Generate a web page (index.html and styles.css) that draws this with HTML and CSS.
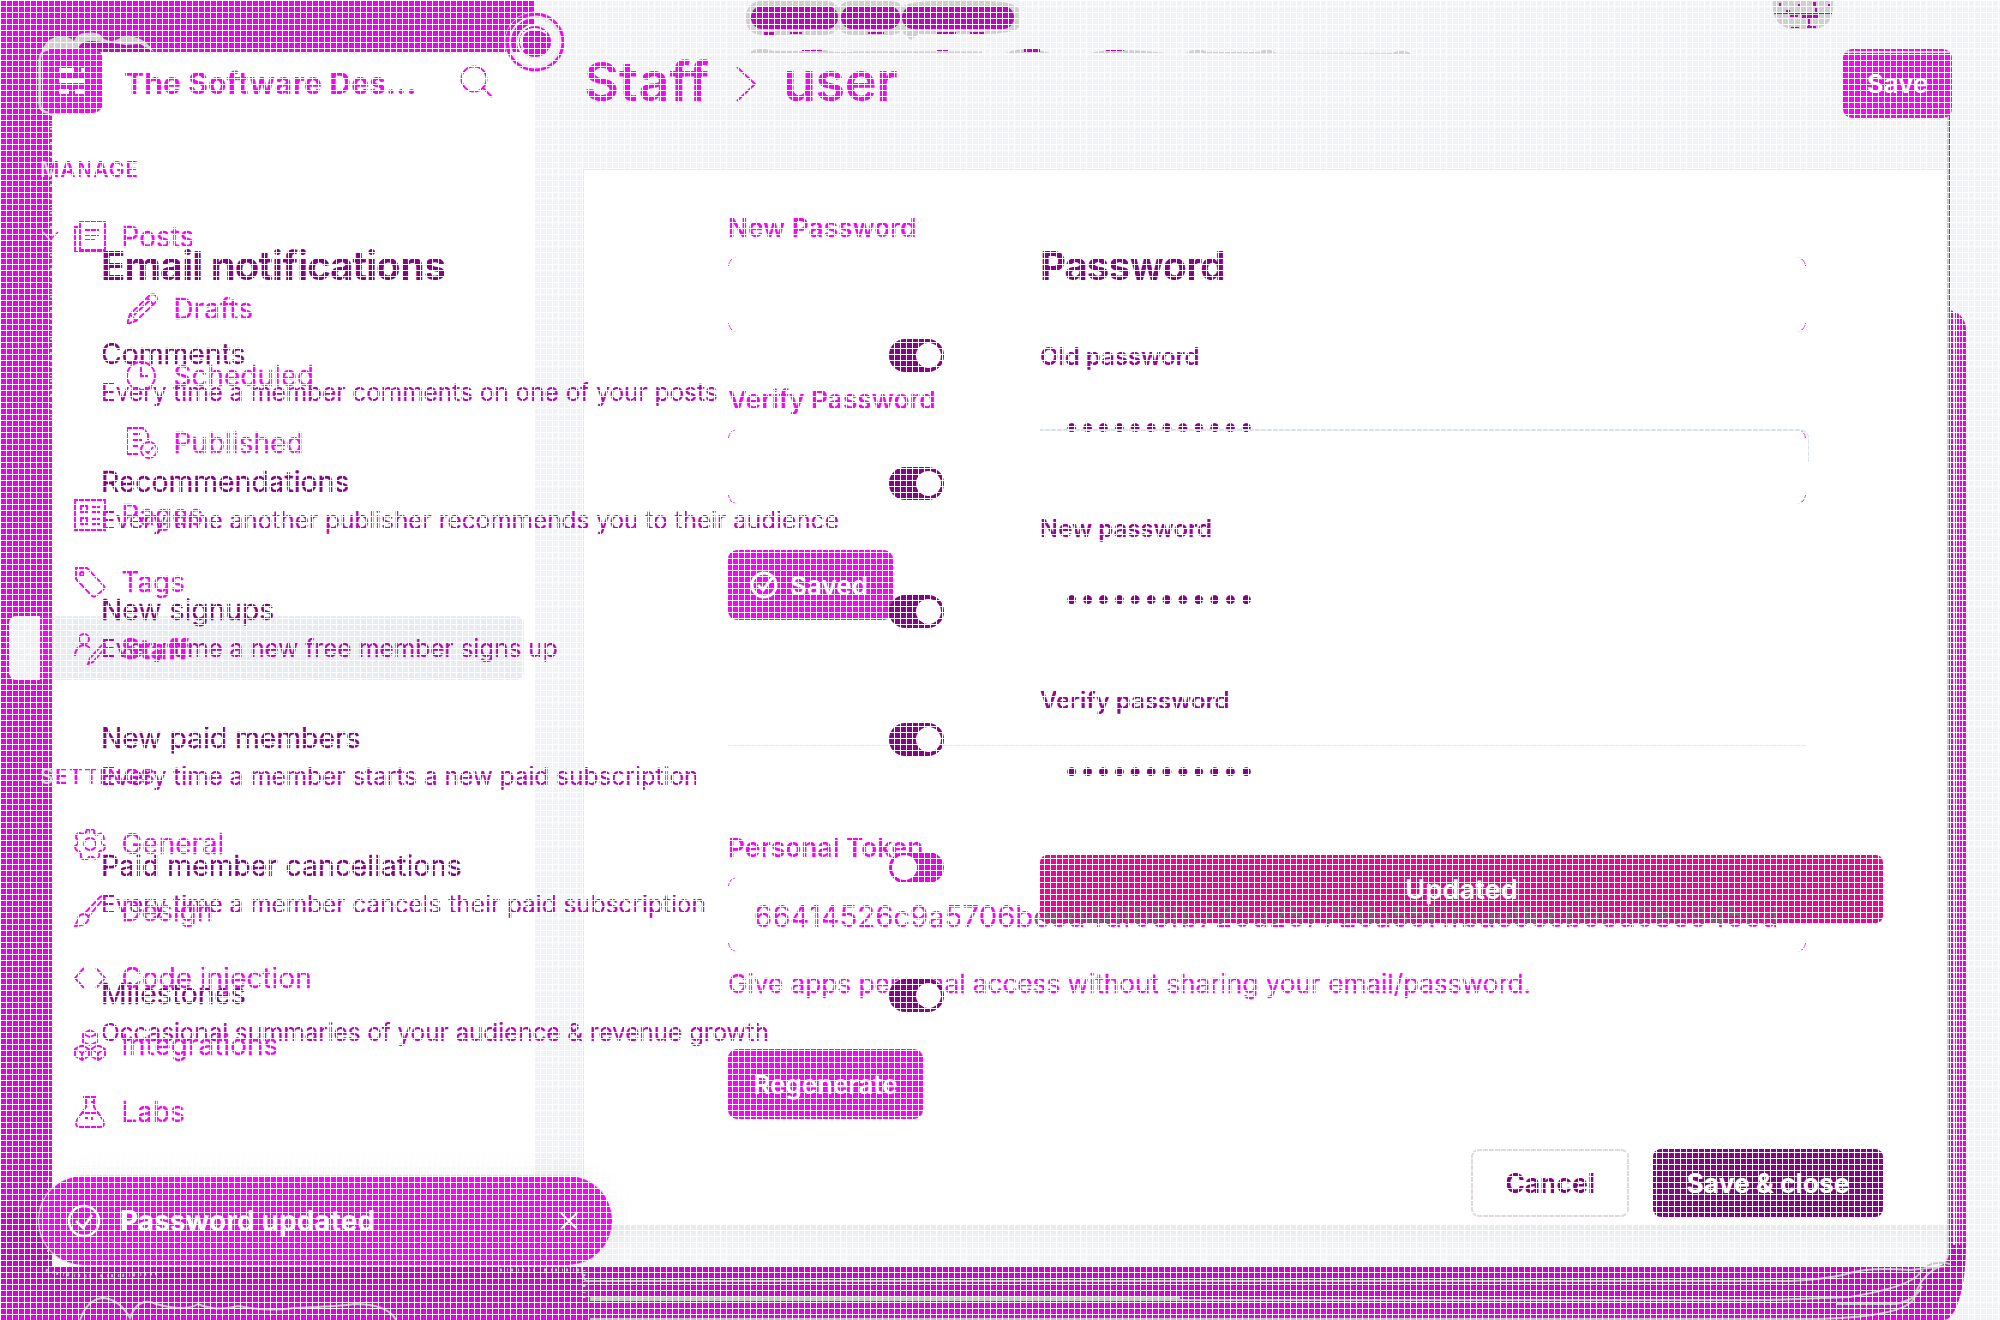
FILE: index.html
```
<!DOCTYPE html>
<html lang="en">
<head>
<meta charset="utf-8">
<title>Staff settings</title>
<link rel="stylesheet" href="styles.css">
</head>
<body>
<div class="stage">
  <div class="backdrop">
    <div class="backdrop-left"></div>
    <div class="backdrop-bottom"></div>
    <div class="backdrop-edge"></div>
    <div class="panel"><div class="panel-side"></div><div class="panel-gutter"></div></div>
    <svg class="smudges" width="2000" height="1320" viewBox="0 0 2000 1320" fill="none">
      <g fill="#cfcfcf">
        <path d="M42 52q2-12 14-15q10-3 18 4q3-8 12-8q14-2 18 6q8 4 14 0q8-6 16-2q12 2 20 15z"/>
        <rect x="746" y="1" width="95" height="34" rx="15"/><rect x="836" y="1" width="70" height="34" rx="15"/><path d="M903 6q10-6 60-5q50-2 56 8v18q-6 8-50 7l-50 0-8 6-8-7z"/>
        <path d="M1773 0h60v10q-2 17-18 19h-24q-16-3-18-19z"/>
        <path d="M750 52q10-6 22-1h32q12-4 30 1h20v1H750zM854 51.500h128v1.500H854zM1006 53q18-8 44 0zM1090 53q25-6 76 0zM1186 53q10-6 22-1h50q10-5 18 1h116q10-4 19 0v1z"/>
      </g>
      <path fill="#d000d0" d="M50 52q8-4 20-4l6 4zM76 52q4-12 16-11q22 2 34 4l14-1 14 8z"/>
      <g fill="#c400c4">
        <rect x="751" y="6" width="87" height="23" rx="11"/><rect x="841" y="6" width="59" height="23" rx="11"/><rect x="902" y="6" width="112" height="23" rx="11"/>
        <path d="M802 50h20v1h-20zM936 50h12v1h-12zM1024 49h16v3h-16zM1106 50h18v1h-18zM764 32h10v3h-10zM790 32h12v2h-12zM868 32h16v2h-16zM936 32h20v2h-20zM970 32h14v2h-14z"/>
        <path d="M1774 13h58v1h-58zM1786 10h4v2h-4zM1790 15h8v2h-8zM1802 15h16v3h-16zM1812 2h4v5h-4zM1779 3h2v3h-2zM1798 4h2v3h-2zM1815 8h2v4h-2zM1808 19h2v8h-2zM1791 27h8v1h-8zM1806 26h10v2h-10zM1828 4h2v3h-2z"/>
      </g>
      <path stroke="#c6c6c6" stroke-width="2" d="M590 1281h1200q40-2 60-8t60-3l36-4M590 1298h590M590 1300h1180l80-3q60-10 70-24t30-9M590 1319h1230q90-3 95-23t25-30M1836 1304h60q20-4 26-18M80 1320q8-22 24-22q16 2 26 20q8-22 26-14q30 8 42 0q18 8 40 2q30 6 56 2q50-2 60-4q34 0 42 16M590 1281q-8 2-8-14"/>
      <path stroke="#c6c6c6" stroke-width="3" stroke-dasharray="2 5 1 3" d="M46 1270q20 10 120 3M500 1270h84v30"/>
      <path stroke="#d8b8da" stroke-width="2" stroke-dasharray="2 7 1 4" d="M48 1180v80M51 100v320"/>
      <rect x="39" y="51" width="30" height="62" rx="9" stroke="#ddc8de" stroke-width="1.500"/>
      <circle cx="535" cy="42" r="25" stroke="#f3d8f4" stroke-width="2"/>
      <circle cx="535" cy="42" r="30" stroke="#f0d4f2" stroke-width="1"/>
      <circle cx="535" cy="42" r="28" stroke="#f0f" stroke-width="3"/>
      <circle cx="535" cy="42" r="17" fill="#ee00ee" stroke="#f1f1f4" stroke-width="2"/>
      <path d="M524 50a13 13 0 0 1 0-17q10-8 22 0M520 49a17 17 0 0 0 30 0" stroke="#f1f1f4" stroke-width="2"/>
    </svg>
  </div>

  <div class="app">
    <aside class="sidebar">
      <div class="brand">
        <svg class="logo" width="64" height="64" viewBox="0 0 64 64"><rect width="64" height="64" rx="10" fill="#f0f"/><path fill="none" stroke="#e6c4e8" d="M10 .5Q1 1 1 10v44q0 9 9 9.500"/><path fill="#fff" d="M20 19h15v4H20zM42 19h4v4h-4zM20 29h26v5H20zM20 40h10v5H20zM36 40h10v5H36z"/></svg>
        <span class="brand-name">The Software Des...</span>
        <svg class="search" width="34" height="34" viewBox="0 0 34 34"><circle cx="14" cy="14" r="12.500"/><path d="M23 23l9 9"/></svg>
      </div>
      <div class="group"><span>MANAGE</span></div>
      <nav class="nav nav-manage">
        <a class="item posts"><svg class="chev" width="18" height="12" viewBox="0 0 18 12"><path d="M1 1l7 8" stroke="#d8c8d8"/><path d="M8 9l8-8"/></svg><svg class="icon" viewBox="0 0 32 32"><path d="M6 1h25v28H6zM6 6H1v25h28v-2M11 9h14M11 14h14M11 19h10"/></svg>Posts</a>
        <a class="item sub first"><svg class="icon" viewBox="0 0 32 32"><path d="M1 31l3-10L24 2q4-2 6 1t0 6L10 28zM21 5l6 6M4 21l6 7M8 22L24 7"/></svg>Drafts</a>
        <a class="item sub"><svg class="icon" viewBox="0 0 32 32"><circle cx="15" cy="16" r="14"/><path d="M15 7v9h7"/></svg>Scheduled</a>
        <a class="item sub"><svg class="icon" viewBox="0 0 32 32"><path d="M13 27H1V1h16l5 6v6M6 7h8M6 13h10M6 19h6"/><circle cx="23" cy="23" r="8"/><path d="M19 23l3 3 5-6"/></svg>Published</a>
        <a class="item pages"><svg class="icon" viewBox="0 0 32 32"><path d="M1 1h30v30H1zM7 7h6v6H7zM7 19h6v6H7zM18 8h8M18 13h8M18 20h8M18 25h8"/></svg>Pages</a>
        <a class="item"><svg class="icon" viewBox="0 0 32 32"><path d="M2 2h11l17 18q1 2-1 4l-7 6q-2 1-4 0L2 13z"/><circle cx="8" cy="8" r="2"/></svg>Tags</a>
        <a class="item active"><span class="pill"><i></i></span><svg class="icon" viewBox="0 0 32 32"><circle cx="10" cy="6" r="5"/><path d="M1 23q0-9 8-11 5 0 7 4M14 31l2-6L28 12q4-1 3 3L19 29z"/></svg><b>Staff</b></a>
      </nav>
      <div class="group settings"><span>SETTINGS</span></div>
      <nav class="nav nav-settings">
        <a class="item"><svg class="icon" viewBox="0 0 32 32"><circle cx="16" cy="16" r="6"/><path d="M12 5q0-4 3-4l1 3 1-3q4 0 3 4q1 2 3 2q4-3 6 0l1 4-2 1v4l3 2q0 4-3 5q-2-1-3 1q1 5-1 6q-3 2-5-1h-4q-2 4-6 2q-3-1-2-5q-1-3-3-3q-3-1-3-5l3-2v-4l-2-2q0-5 4-5q4 2 6-1z"/></svg>General</a>
        <a class="item"><svg class="icon" viewBox="0 0 32 32"><path d="M11 18L26 2q3-2 4 1L15 21M10 19q-6 0-6 6l-3 6q9 0 12-4 3-4 0-7z"/></svg>Design</a>
        <a class="item"><svg class="icon" viewBox="0 0 32 32"><path d="M10 6L1 16l9 10M22 6l9 10-9 10"/></svg>Code injection</a>
        <a class="item"><svg class="icon" viewBox="0 0 32 32"><path d="M16 1l7 4v8l-7 3-7-3V5zM9 5l7 3 7-3M8 16l7 4v7l-7 4-7-4v-7zM1 20l7 4 7-4M24 16l7 4v7l-7 4-7-4v-7zM17 20l7 4 7-4M8 24v7M24 24v7"/></svg>Integrations</a>
        <a class="item"><svg class="icon" viewBox="0 0 32 32"><path d="M9 1h14M12 1v10L3 24q-3 7 3 7h20q6 0 3-7L20 11V1M7 17h18M20 6h-4M11 22h3M18 21v3"/></svg>Labs</a>
      </nav>
    </aside>
    <main class="main">
      <header class="topbar">
        <h1>Staff</h1>
        <svg class="crumb" width="22" height="36" viewBox="0 0 22 36"><path d="M1 1l18 17L1 35"/></svg>
        <h1 class="user">user</h1>
        <button class="btn save">Save</button>
      </header>
      <section class="card">
        <label class="label">New Password</label>
        <div class="field"></div>
        <label class="label second">Verify Password</label>
        <div class="field"></div>
        <button class="btn saved"><svg width="28" height="28" viewBox="0 0 28 28"><circle cx="14" cy="14" r="12"/><path d="M8 14l5 5 9-12"/></svg>Saved</button>
        <hr>
        <label class="label third">Personal Token</label>
        <div class="field token"><span>66414526c9a5706b</span><span class="masked">eed4df08fb720d257720a55f1fbae9ecb9ed08e945cd</span></div>
        <p class="hint">Give apps personal access without sharing your email/password.</p>
        <button class="btn regen">Regenerate</button>
      </section>
    </main>
  </div>

  <div class="modal">
    <section class="notifications">
      <h2>Email notifications</h2>
      <div class="row"><div><h3>Comments</h3><p>Every time a member comments on one of your posts</p></div><span class="toggle"></span></div>
      <div class="row"><div><h3>Recommendations</h3><p>Every time another publisher recommends you to their audience</p></div><span class="toggle"></span></div>
      <div class="row"><div><h3>New signups</h3><p>Every time a new free member signs up</p></div><span class="toggle"></span></div>
      <div class="row"><div><h3>New paid members</h3><p>Every time a member starts a new paid subscription</p></div><span class="toggle"></span></div>
      <div class="row"><div><h3>Paid member cancellations</h3><p>Every time a member cancels their paid subscription</p></div><span class="toggle off"></span></div>
      <div class="row"><div><h3>Milestones</h3><p class="last">Occasional summaries of your audience &amp; revenue growth</p></div><span class="toggle"></span></div>
    </section>
    <section class="password">
      <h2>Password</h2>
      <div class="pwfield"><label>Old password</label><div class="dots lined">••••••••••••</div></div>
      <div class="pwfield"><label>New password</label><div class="dots">••••••••••••</div></div>
      <div class="pwfield"><label>Verify password</label><div class="dots">••••••••••••</div></div>
      <button class="updated">Updated</button>
      <footer class="actions"><button class="cancel">Cancel</button><button class="close">Save &amp; close</button></footer>
    </section>
  </div>

  <div class="toast">
    <svg width="34" height="34" viewBox="0 0 34 34"><circle cx="17" cy="17" r="15"/><path d="M9 17l7 7 9-13"/></svg>
    <span class="toast-text">Password updated</span>
    <svg class="x" width="18" height="18" viewBox="0 0 18 18"><path d="M1 1l16 16M17 1L1 17"/></svg>
  </div>
  <div class="mesh"></div>
</div>
</body>
</html>
```
FILE: styles.css
```
* { box-sizing: border-box; margin: 0; }
body { font-family: Inter, "Liberation Sans", sans-serif; background: #f1f3f7; overflow: hidden; }
svg { fill: none; stroke: #f0f; stroke-width: 2; flex: none; }
.logo, .smudges { stroke: none; }
button { font: inherit; border: 0; display: flex; align-items: center; justify-content: center; white-space: nowrap; padding: 0; }
h1, h2, h3, p, label, span { white-space: nowrap; }

/* Layers share one grid cell and stack in source order */
.stage { display: grid; width: 2000px; height: 1320px; overflow: hidden; isolation: isolate; }
.stage > * { grid-area: 1 / 1; }

.backdrop { display: grid; z-index: -2; }
.backdrop > * { grid-area: 1 / 1; }
.backdrop-left { width: 534px; background: linear-gradient(#f000f0 0, #f000f0 3%, #ea00ea 50%, #e000e0); }
.backdrop-bottom { width: 1966px; height: 110px; align-self: end; background: linear-gradient(#d000d0 50%, #e800e8); border-bottom-right-radius: 22px 75px; }
.backdrop-edge { width: 19px; margin: 310px 0 75px 1947px; background: linear-gradient(90deg, #d8d0d8 0 3px, #d900d9 3px 6px, #eee 6px 8px, #e800e8 8px 12px, #f4d0f4 12px 13px, #ea00ea 13px); border-radius: 0 30px 0 0; }
.panel { display: flex; width: 1897px; height: 1215px; margin: 52px 0 0 52px; background: linear-gradient(#f1f3f7 0 117px, #fff 117px 1173px, #e9eaec 1173px, #f2f4f7 1195px); border-right: 2px solid #ccc; border-bottom-right-radius: 14px; box-shadow: 1px 0 #e800e8; }
.panel-side { width: 482px; background: #fff; }
.panel-gutter { width: 49px; background: #f1f3f7; }

.app { display: flex; color: #f0f; }
.sidebar { width: 535px; }
.brand { height: 162px; display: flex; align-items: center; padding-left: 39px; }
.brand-name { width: 357px; padding: 3px 0 0 21px; font-size: 30px; font-weight: 700; letter-spacing: 0.15px; }
.search { margin-top: 1px; }
.group { height: 15px; line-height: 15px; padding-left: 40px; font-size: 21px; font-weight: 600; letter-spacing: 0.9px; }
.group span { color: transparent; background: linear-gradient(90deg, #ddc8de 12px, #f0f 12px); background-clip: text; -webkit-background-clip: text; }
.settings { margin-top: 87px; letter-spacing: 1.3px; }
.nav { display: flex; flex-direction: column; }
.nav-manage { padding-top: 26.5px; }
.nav-settings { padding-top: 26px; }
.item { position: relative; height: 67px; display: flex; align-items: center; padding-left: 74px; font-size: 27.8px; letter-spacing: 0.1px; -webkit-text-stroke: 0.3px; }
.item b { font-weight: 700; letter-spacing: 0.4px; }
.icon { width: 32px; height: 32px; margin-right: 15.500px; stroke-width: 1.9; }
.sub { padding-left: 126px; }
.first { margin-top: 4.5px; }
.pages { margin-top: 5px; }
.posts { padding-left: 42px; }
.chev { margin-right: 14px; stroke-width: 1.5; }
.pill { position: absolute; z-index: -1; left: 9px; top: 1px; width: 515px; height: 64px; border-radius: 8px; background: #e8ebf1; display: flex; overflow: hidden; }
.pill i { width: 43px; background: linear-gradient(90deg, #eef2f3 0 31px, #f0f 31px); }

.main { width: 1465px; padding-left: 48px; }
.topbar { height: 169px; padding-bottom: 7px; display: flex; align-items: center; }
h1 { font-size: 54px; font-weight: 600; width: 153px; padding-left: 1px; }
.crumb { width: 22px; margin-right: 24px; margin-top: 6px; }
.user { width: 1061px; letter-spacing: -0.5px; }
.btn { background: #f0f; color: #fff; font-weight: 600; font-size: 26px; border-radius: 9px; height: 70px; }
.btn svg { stroke: #fff; stroke-width: 3; }
.save { width: 109px; margin-top: 4px; height: 69px; background: linear-gradient(#f0f 2px, #f2c4f4 2px 4px, #f0f 4px); }
.card { height: 1056px; width: 1364px; padding: 43px 0 0 144px; border-top: 1px solid #e5e6ea; border-left: 1px solid #e5e6ea; display: flex; flex-direction: column; }
.label { height: 30px; line-height: 30px; font-size: 26.3px; font-weight: 600; }
.field { position: relative; width: 1078px; height: 75px; margin-top: 14px; }
.field::before { content: ""; position: absolute; inset: 0; border: 1.5px solid #f0f; border-radius: 9px; mask: linear-gradient(90deg, #000 7px, transparent 7px calc(100% - 6px), #000 0), linear-gradient(#000 9px, transparent 9px calc(100% - 9px), #000 0); mask-composite: intersect; }
.second { margin-top: 53px; }
.saved { width: 165px; margin-top: 46px; gap: 12px; padding-right: 3px; }
hr { width: 1078px; border: 0; height: 1px; background: #e8e9ec; margin-top: 125px; }
.third { margin-top: 87px; }
.token { padding: 4px 0 0 26px; display: flex; align-items: center; font-size: 29.3px; z-index: 3; white-space: nowrap; -webkit-text-stroke: 0.2px; }
.masked { color: transparent; background: linear-gradient(#746474 0 24px, #f0f 24px); background-clip: text; -webkit-background-clip: text; }
.hint { height: 30px; line-height: 30px; margin-top: 17px; font-size: 26.15px; -webkit-text-stroke: 0.3px; }
.regen { width: 195px; margin-top: 50px; }

.modal { display: grid; grid-template-columns: 843px 843px; column-gap: 96px; padding: 236px 0 0 101px; color: #8b008b; }
h2 { height: 101px; line-height: 60px; font-size: 40px; font-weight: 700; letter-spacing: -0.92px; }
.row { display: flex; justify-content: space-between; height: 128px; }
h3 { font-size: 28.3px; font-weight: 400; line-height: 34px; -webkit-text-stroke: 0.3px; }
.row p { font-size: 24.4px; line-height: 34px; margin-top: 4px; color: #c000c0; -webkit-text-stroke: 0.2px; }
.row .last { letter-spacing: -0.08px; }
.toggle { width: 55px; height: 33px; margin-top: 2px; border-radius: 16px; background: #8b008b; display: flex; justify-content: flex-end; padding: 4px 3px 4px 4px; }
.toggle::before { content: ""; width: 25px; height: 25px; border-radius: 50%; background: #fff; }
.off { justify-content: flex-start; background: #ec00ec; height: 31px; padding: 3px; margin-top: 3px; }
.password h2 { height: 104px; }
.pwfield { height: 172px; }
.pwfield label { display: block; height: 34px; line-height: 34px; font-size: 24px; font-weight: 600; color: #a000a0; }
.dots { position: relative; height: 34px; line-height: 34px; margin-top: 35px; padding-left: 25px; font-size: 28px; font-weight: 700; letter-spacing: 2.6px; }
.lined::after { content: ""; position: absolute; left: 0; top: 20px; width: 768px; height: 32px; border-top: 2px solid #d9e3eb; border-right: 1px solid #d9e3eb; border-top-right-radius: 9px; }
.updated { width: 843px; height: 68px; margin-top: -1px; padding-bottom: 1px; border-radius: 7px; background: #f50097; color: #fff; font-size: 27.4px; font-weight: 600; }
.actions { display: flex; justify-content: flex-end; gap: 24px; margin-top: 226px; }
.actions button { height: 68px; border-radius: 8px; font-size: 26.4px; font-weight: 700; padding-bottom: 1px; }
.actions .cancel { width: 158px; border: 2px solid #dfd8df; background: #fff; color: #8b008b; }
.actions .close { width: 230px; background: #8b008b; color: #fff; }

.toast { align-self: start; width: 573px; height: 89px; margin: 1176px 0 0 39px; border-radius: 45px; background: #f0f; color: #fff; display: flex; align-items: center; padding: 0 34px 0 28px; box-shadow: 0 0 30px rgba(60, 60, 60, .07), 0 0 1px 1px #eadcea; }
.toast svg { stroke: #fff; stroke-width: 2.5; }
.toast .x { stroke-width: 2; }
.toast-text { flex: 1; margin-left: 19px; font-size: 28px; font-weight: 700; letter-spacing: 0.05px; }

.mesh { pointer-events: none; z-index: 5; background: repeating-linear-gradient(90deg, #fff 0 1px, transparent 1px 6px), repeating-linear-gradient(#fff 0 1px, transparent 1px 6px); }
```
